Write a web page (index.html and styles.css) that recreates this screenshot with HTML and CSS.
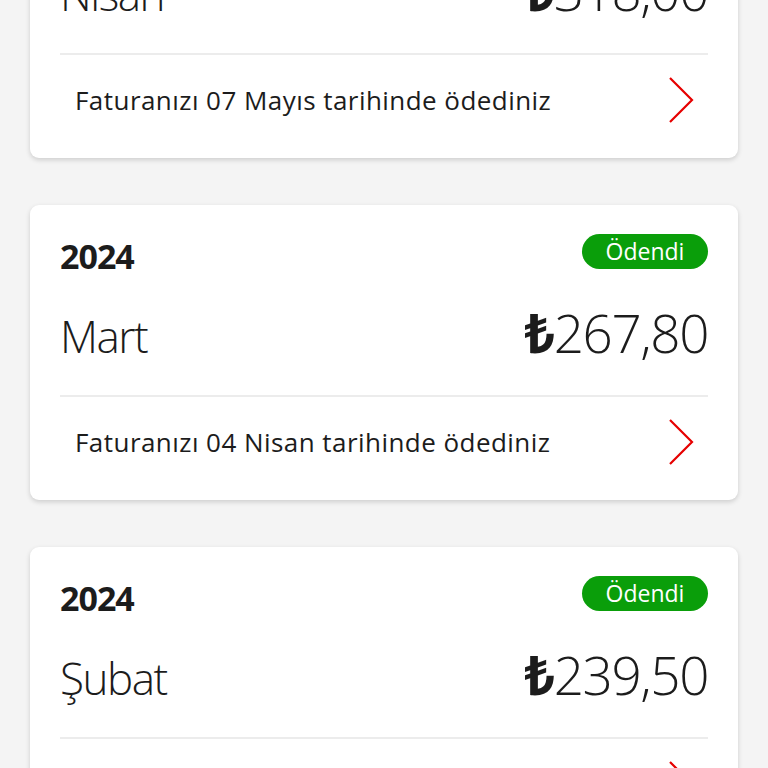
FILE: index.html
```html
<!DOCTYPE html>
<html lang="tr">
<head>
<meta charset="utf-8">
<title>Faturalar</title>
<link rel="stylesheet" href="styles.css">
</head>
<body>
<div class="list">
  <section class="card">
    <div class="head">
      <span class="year">2024</span>
      <span class="badge">Ödendi</span>
    </div>
    <div class="main">
      <span class="month">Nisan</span>
      <span class="amount"><span class="cur">₺</span>318,00</span>
    </div>
    <div class="foot">
      <span class="note">Faturanızı 07 Mayıs tarihinde ödediniz</span>
      <svg class="chev" width="26" height="48" viewBox="0 0 26 48"><polyline points="2,2 24,24 2,46" fill="none" stroke="#e60000" stroke-width="2.2"/></svg>
    </div>
  </section>
  <section class="card">
    <div class="head">
      <span class="year">2024</span>
      <span class="badge">Ödendi</span>
    </div>
    <div class="main">
      <span class="month">Mart</span>
      <span class="amount"><span class="cur">₺</span>267,80</span>
    </div>
    <div class="foot">
      <span class="note">Faturanızı 04 Nisan tarihinde ödediniz</span>
      <svg class="chev" width="26" height="48" viewBox="0 0 26 48"><polyline points="2,2 24,24 2,46" fill="none" stroke="#e60000" stroke-width="2.2"/></svg>
    </div>
  </section>
  <section class="card">
    <div class="head">
      <span class="year">2024</span>
      <span class="badge">Ödendi</span>
    </div>
    <div class="main">
      <span class="month">Şubat</span>
      <span class="amount"><span class="cur">₺</span>239,50</span>
    </div>
    <div class="foot">
      <span class="note">Faturanızı 04 Mart tarihinde ödediniz</span>
      <svg class="chev" width="26" height="48" viewBox="0 0 26 48"><polyline points="2,2 24,24 2,46" fill="none" stroke="#e60000" stroke-width="2.2"/></svg>
    </div>
  </section>
</div>
</body>
</html>
```
FILE: styles.css
```css
html, body {
  margin: 0;
  padding: 0;
  background: #f4f4f4;
  font-family: "Open Sans", "Noto Sans", sans-serif;
  color: #1c1c1c;
  overflow: hidden;
  height: 768px;
}
.list {
  margin-top: -137px;
  padding: 0 30px;
  display: flex;
  flex-direction: column;
  gap: 47px;
}
.card {
  background: #fff;
  border-radius: 9px;
  box-shadow: 0 2px 5px rgba(0,0,0,0.16);
  height: 295px;
  padding: 0 30px;
  box-sizing: border-box;
  display: flex;
  flex-direction: column;
}
.head {
  margin-top: 29px;
  height: 35px;
  display: flex;
  justify-content: space-between;
  align-items: center;
}
.year {
  font-size: 34px;
  font-weight: 700;
  line-height: 1;
  padding-top: 8px;
  letter-spacing: -1px;
}
.badge {
  background: #0a9e0a;
  color: #fff;
  font-size: 23px;
  line-height: 35px;
  height: 35px;
  width: 126px;
  text-align: center;
  border-radius: 18px;
}
.main {
  height: 128px;
  display: flex;
  justify-content: space-between;
  align-items: baseline;
  padding-top: 37px;
  box-sizing: border-box;
  border-bottom: 2px solid #ececec;
}
.month {
  font-size: 44px;
  font-weight: 300;
  line-height: 1;
  letter-spacing: -1.5px;
}
.amount {
  font-size: 53px;
  font-weight: 300;
  line-height: 1;
  letter-spacing: -1.4px;
}
.cur {
  font-weight: 700;
}
.foot {
  flex: 1;
  display: flex;
  align-items: center;
  justify-content: space-between;
  padding: 0 14px 14px 15px;
}
.note {
  font-size: 26px;
  font-weight: 400;
  letter-spacing: 0.45px;
}
.chev {
  display: block;
  width: 26px;
  height: 48px;
}
```
